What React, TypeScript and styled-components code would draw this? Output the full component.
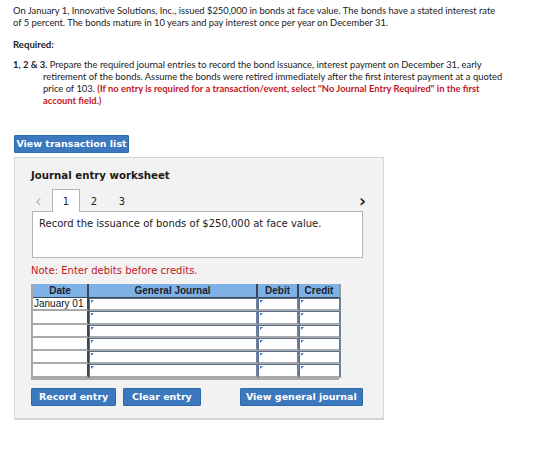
import { Fragment } from "react";
import styled, { createGlobalStyle } from "styled-components";

const GlobalStyle = createGlobalStyle`
  body {
    margin: 0;
    background: #ffffff;
    color: #222;
    font-family: "Liberation Sans", Arial, sans-serif;
  }
`;

const Page = styled.div`
  padding: 5px 13px 20px 13px;
`;

const Intro = styled.p`
  margin: 0;
  font-family: Lato, "Liberation Sans", sans-serif;
  font-size: 9.4px;
  line-height: 12px;
  color: #222;
  white-space: nowrap;
`;

const Required = styled.p`
  margin: 10px 0 0 0;
  font-family: Lato, "Liberation Sans", sans-serif;
  font-size: 9.6px;
  font-weight: 700;
  line-height: 12px;
`;

const Task = styled.p`
  margin: 8px 0 0 0;
  padding-left: 30px;
  text-indent: -30px;
  font-family: Lato, "Liberation Sans", sans-serif;
  font-size: 9.4px;
  line-height: 12px;
  color: #222;
  white-space: nowrap;

  b {
    font-weight: 700;
  }
`;

const Warn = styled.span`
  color: #c4161c;
  font-weight: 700;
`;

const BlueButton = styled.button<{ $w: number }>`
  width: ${(p) => p.$w}px;
  height: 18px;
  padding: 0;
  border: 1px solid #2f69a8;
  border-radius: 1px;
  background: #3b78bd;
  color: #ffffff;
  font-family: "DejaVu Sans", Verdana, sans-serif;
  font-size: 9.5px;
  font-weight: 700;
  line-height: 16px;
  white-space: nowrap;
  cursor: pointer;
`;

const TopBar = styled.div`
  margin-top: 26px;
  margin-left: 1px;
`;

const Worksheet = styled.section`
  width: 370px;
  margin: 4px 0 0 1px;
  padding: 11px 20px 12px 16px;
  box-sizing: border-box;
  background: #f2f2f2;
  border: 1px solid #d4d4d4;
  border-bottom-width: 2px;
`;

const Title = styled.h3`
  margin: 0;
  font-family: "DejaVu Sans", Verdana, sans-serif;
  font-size: 10.2px;
  font-weight: 700;
  line-height: 13px;
  color: #1a1a1a;
`;

const TabRow = styled.div`
  display: flex;
  align-items: flex-end;
  margin-top: 7px;
  height: 23px;
  position: relative;
  z-index: 1;
`;

const Arrow = styled.span<{ $muted?: boolean }>`
  width: 21px;
  align-self: center;
  text-align: ${(p) => (p.$muted ? "left" : "right")};
  padding-left: ${(p) => (p.$muted ? 4 : 0)}px;
  margin-right: ${(p) => (p.$muted ? 0 : -3)}px;
  box-sizing: border-box;
  font-family: "DejaVu Sans", sans-serif;
  font-size: 17px;
  line-height: 16px;
  color: ${(p) => (p.$muted ? "#b8b8b8" : "#222")};
  font-weight: ${(p) => (p.$muted ? 400 : 700)};
`;

const Tab = styled.div<{ $active?: boolean }>`
  width: 28px;
  height: ${(p) => (p.$active ? 23 : 22)}px;
  box-sizing: border-box;
  display: flex;
  align-items: center;
  justify-content: center;
  font-family: "DejaVu Sans", Verdana, sans-serif;
  font-size: 10px;
  color: #222;
  background: ${(p) => (p.$active ? "#ffffff" : "transparent")};
  border: 1px solid ${(p) => (p.$active ? "#b5b5b5" : "transparent")};
  border-bottom: none;
`;

const Spacer = styled.div`
  flex: 1;
`;

const Description = styled.div`
  margin: -1px 0 0 1px;
  height: 47px;
  box-sizing: border-box;
  padding: 5px 6px;
  background: #ffffff;
  border: 1px solid #b5b5b5;
  font-family: "DejaVu Sans", Verdana, sans-serif;
  font-size: 10px;
  line-height: 14px;
  color: #1a1a1a;
`;

const Note = styled.p`
  margin: 6px 0 0 0;
  font-family: "DejaVu Sans", Verdana, sans-serif;
  font-size: 10px;
  line-height: 13px;
  color: #c4161c;
`;

const JournalGrid = styled.div`
  margin-top: 7px;
  width: 308px;
  display: grid;
  grid-template-columns: 56px 169px 41px 42px;
  grid-auto-rows: 13.3px;
  grid-template-rows: 14px;
  background: #a9a9a9;
  border-bottom: 2px solid #a9a9a9;
  border-left: 2px solid #a9a9a9;
  box-sizing: border-box;
`;

const HeadCell = styled.div<{ $last?: boolean }>`
  display: flex;
  align-items: center;
  justify-content: center;
  background: #7eb1e6;
  border-right: 2px solid ${(p) => (p.$last ? "#9a9a9a" : "#3a4656")};
  border-bottom: 1px solid #3a4656;
  font-family: "Liberation Sans", Arial, sans-serif;
  font-size: 10px;
  font-weight: 700;
  color: #1c222a;
`;

const DateCell = styled.div`
  box-sizing: border-box;
  padding: 0 0 0 1px;
  background: #ffffff;
  border-bottom: 2px solid #a9a9a9;
  border-right: 2px solid #3a4656;
  font-family: "Liberation Sans", Arial, sans-serif;
  font-size: 10px;
  line-height: 11px;
  color: #111;
  white-space: nowrap;
  overflow: hidden;
`;

const EntryCell = styled.div`
  position: relative;
  box-sizing: border-box;
  background: #ffffff;
  border-top: 1px solid #5c6f8c;
  border-left: 1px solid #5c6f8c;
  border-right: 2px solid #6d7f9b;
  border-bottom: 2px solid #a9a9a9;

  &::before {
    content: "";
    position: absolute;
    top: 1px;
    left: 1px;
    width: 0;
    height: 0;
    border-top: 3px solid #3a78c8;
    border-right: 3px solid transparent;
  }
`;

const Actions = styled.div`
  display: flex;
  margin-top: 8px;
  gap: 7px;
`;

const ActionGap = styled.div`
  width: 26px;
`;

const rows = ["January 01", "", "", "", "", ""];

export default function App() {
  return (
    <Page>
      <GlobalStyle />
      <Intro>
        On January 1, Innovative Solutions, Inc., issued $250,000 in bonds at face value. The bonds have a stated interest rate
        <br />
        of 5 percent. The bonds mature in 10 years and pay interest once per year on December 31.
      </Intro>
      <Required>Required:</Required>
      <Task>
        <b>1, 2 &amp; 3.</b> Prepare the required journal entries to record the bond issuance, interest payment on December 31, early
        <br />
        retirement of the bonds. Assume the bonds were retired immediately after the first interest payment at a quoted
        <br />
        price of 103.{" "}
        <Warn>
          (If no entry is required for a transaction/event, select "No Journal Entry Required" in the first
          <br />
          account field.)
        </Warn>
      </Task>

      <TopBar>
        <BlueButton $w={115}>View transaction list</BlueButton>
      </TopBar>

      <Worksheet>
        <Title>Journal entry worksheet</Title>
        <TabRow>
          <Arrow $muted>‹</Arrow>
          <Tab $active>1</Tab>
          <Tab>2</Tab>
          <Tab>3</Tab>
          <Spacer />
          <Arrow>›</Arrow>
        </TabRow>
        <Description>Record the issuance of bonds of $250,000 at face value.</Description>
        <Note>Note: Enter debits before credits.</Note>

        <JournalGrid>
          <HeadCell>Date</HeadCell>
          <HeadCell>General Journal</HeadCell>
          <HeadCell>Debit</HeadCell>
          <HeadCell $last>Credit</HeadCell>
          {rows.map((d, i) => (
            <Fragment key={i}>
              <DateCell>{d}</DateCell>
              <EntryCell />
              <EntryCell />
              <EntryCell />
            </Fragment>
          ))}
        </JournalGrid>

        <Actions>
          <BlueButton $w={89}>Record entry</BlueButton>
          <BlueButton $w={81}>Clear entry</BlueButton>
          <ActionGap />
          <BlueButton $w={129}>View general journal</BlueButton>
        </Actions>
      </Worksheet>
    </Page>
  );
}
